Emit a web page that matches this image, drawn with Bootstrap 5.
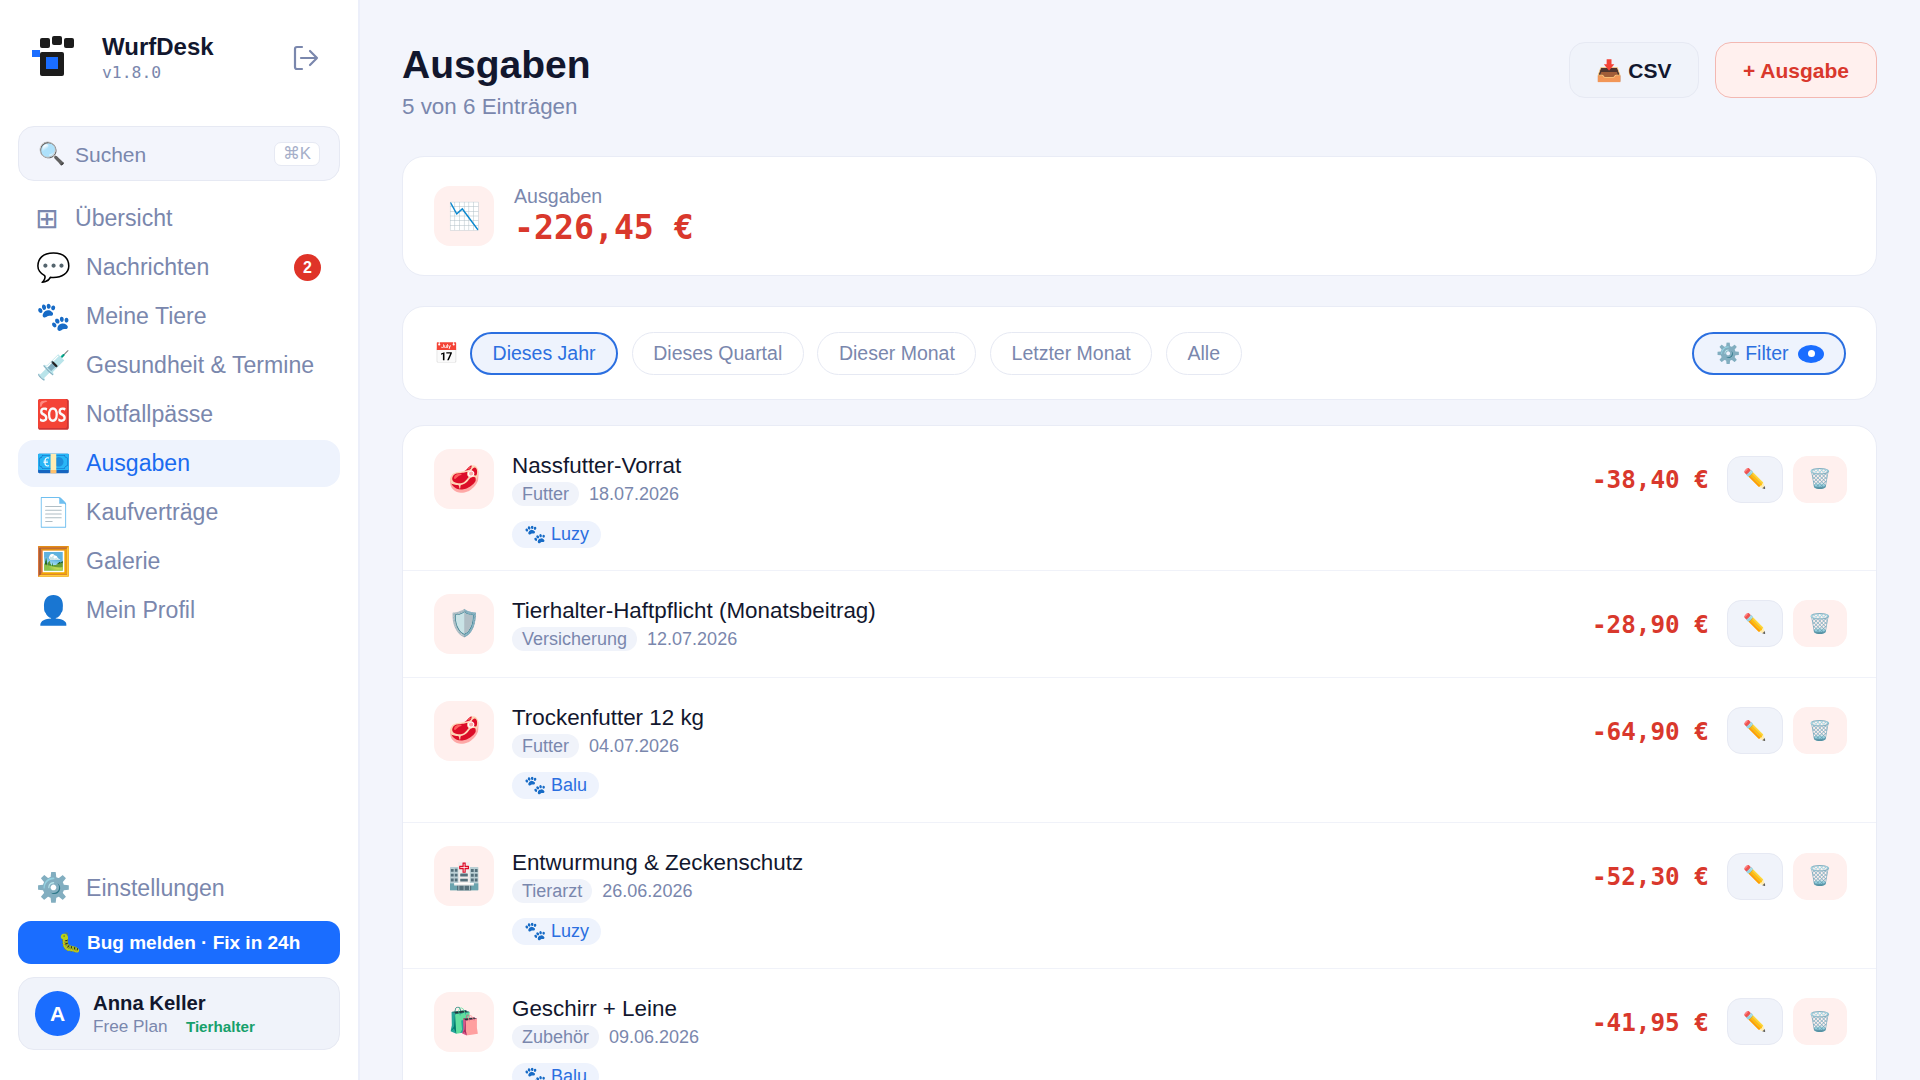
<!DOCTYPE html>
<html lang="de">
<head>
    <meta charset="UTF-8">
    <meta name="viewport" content="width=device-width, initial-scale=1.0">
    <title>WurfDesk - Ausgaben</title>
    <link href="https://cdn.jsdelivr.net/npm/bootstrap@5.3.3/dist/css/bootstrap.min.css" rel="stylesheet">
    <style>
        html, body { height: 100vh; overflow: hidden; }
        body { font-family: "Liberation Sans", Arial, sans-serif; background: #f3f5fc; color: #12172e; }
        .wd-mono { font-family: "DejaVu Sans Mono", monospace; }
        .wd-side { width: 360px; flex: 0 0 360px; height: 100vh; background: #fff; border-right: 2px solid #eceffa; padding: 0 18px; }
        .wd-brand { height: 126px; padding: 27px 0 0 14px; }
        .wd-brand-txt { margin: 5px 0 0 26px; }
        .wd-brand-name { font-size: 24px; font-weight: 700; line-height: 32px; margin-top: -1px; }
        .wd-brand-ver { font-size: 16.4px; line-height: 19px; color: #7a87ad; }
        .wd-logout { margin: 17px 21px 0 auto; width: 28px; height: 28px; color: #7a87ad; }
        .wd-search { height: 55px; background: #f3f5fc; border: 1px solid #e6e9f3; border-radius: 16px; padding: 0 19px 0 19px; font-size: 21px; color: #7a87ad; margin-bottom: 14px; }
        .wd-search-ico { width: 37px; font-size: 22px; }
        .wd-search-txt { padding-top: 2px; }
        .wd-kbd { margin-left: auto; background: #fff; border: 1px solid #e6e9f3; border-radius: 7px; padding: 0 8px; height: 24px; line-height: 22px; font-size: 16.8px; color: #a6afc9; }
        .wd-link { height: 47px; margin-bottom: 2px; padding: 0 19px; border-radius: 16px; font-size: 23.1px; color: #7a87ad; text-decoration: none; }
        .wd-link.on { background: #eef3fd; color: #1a6bf0; }
        .wd-link-ico { width: 50px; font-size: 28px; flex: none; margin-left: -1px; line-height: 1; }
        .wd-grid-ico { width: 40px; flex: none; font-family: "DejaVu Sans", sans-serif; font-size: 28px; line-height: 1; margin-left: -2px; }
        .wd-count { margin-left: auto; width: 27px; height: 27px; background: #df3328; font-size: 16px; padding: 0; line-height: 27px; }
        .wd-bug { height: 43px; background: #1a6dff; border-radius: 13px; color: #fff; font-size: 19px; font-weight: 700; border: 0; padding: 1px 0 0; margin-top: 7.5px; }
        .wd-user { height: 73px; margin: 13px 0 30px; background: #f0f3fa; border: 1px solid #e6e9f3; border-radius: 16px; padding: 0 16px; }
        .wd-avatar { width: 45px; height: 45px; background: #1a6dff; color: #fff; font-weight: 700; font-size: 21px; flex: none; }
        .wd-user-txt { margin-left: 13px; }
        .wd-user-name { font-size: 20.3px; font-weight: 700; line-height: 26px; margin-top: -1px; }
        .wd-user-sub { font-size: 17.2px; line-height: 21px; color: #7a87ad; }
        .wd-role { font-size: 15.2px; font-weight: 700; color: #16a06b; margin-left: 13.6px; }
        .wd-main { padding: 42px 43px 0 42px; min-width: 0; }
        .wd-h1 { font-size: 39px; font-weight: 700; line-height: 46px; margin: 0; }
        .wd-sub { font-size: 22.4px; line-height: 30px; color: #7a87ad; margin-top: 4px; }
        .wd-top { height: 114px; }
        .wd-tbtn { height: 56px; border-radius: 16px; font-size: 21px; font-weight: 700; padding: 1px 0 0; }
        .wd-csv { width: 130px; background: #f0f3fa; border: 1px solid #e6e9f3; color: #12172e; }
        .wd-add { width: 162px; background: #fff0ee; border: 1px solid #f3b8b2; color: #d9382c; }
        .wd-panel { background: #fff; border: 1px solid #e9ecf6; border-radius: 22px; }
        .wd-sum { height: 120px; padding: 0 30px 0 30.6px; margin-bottom: 30px; }
        .wd-tile { width: 60px; height: 60px; background: #fff0ee; border-radius: 16px; font-size: 26px; flex: none; }
        .wd-sum-txt { margin-left: 20.4px; padding-top: 2px; }
        .wd-sum-lab { font-size: 19.6px; line-height: 21px; color: #7a87ad; }
        .wd-sum-val { font-size: 33.2px; font-weight: 700; line-height: 41px; color: #d9382c; }
        .wd-filter { height: 94px; padding: 0 30px 0 31px; margin-bottom: 25px; }
        .wd-cal { font-size: 20px; width: 36px; flex: none; }
        .wd-pill { height: 43px; padding: 1px 20.6px 0; border: 1px solid #e6e9f3; border-radius: 22px; background: #fff; font-size: 19.5px; color: #7a87ad; margin-right: 13.5px; }
        .wd-pill.on { background: #eef3fd; border: 2px solid #2b6fe0; color: #2b6fe0; }
        .wd-pill-end { padding-left: 21.4px; padding-right: 20px; margin-right: 0; margin-left: auto; }
        .wd-eye { width: 26px; height: 18px; border-radius: 50%; background: #1a6dff; margin-left: 9.5px; }
        .wd-eye::after { content: ""; width: 7px; height: 7px; border-radius: 50%; background: #fff; }
        .wd-row { padding: 23px 29px 23px 30.6px; border-bottom: 1px solid #f0f2f9; }
        .wd-row:first-child { padding-bottom: 22px; }
        .wd-body { margin-left: 18.4px; }
        .wd-title { font-size: 22.4px; line-height: 33px; }
        .wd-meta { font-size: 18px; line-height: 24px; color: #7a87ad; }
        .wd-chip { background: #f0f3fa; border-radius: 12px; padding: 0 10px; margin-right: 10px; display: inline-block; }
        .wd-pet { display: inline-block; height: 27px; line-height: 27px; margin-top: 14.6px; padding: 0 12px; border-radius: 14px; background: #eef3fd; color: #2b6fe0; font-size: 18px; }
        .wd-right { height: 60px; margin-left: auto; }
        .wd-amt { font-size: 24.3px; font-weight: 700; color: #d9382c; margin-right: 18px; padding-top: 3px; }
        .wd-act { width: 56px; height: 47px; border-radius: 14px; background: #f0f3fa; border: 1px solid #e6e9f3; font-size: 19px; padding: 1px 0 0; }
        .wd-act.del { background: #fff0ee; border-color: #fff0ee; margin-left: 10px; width: 54px; }
    </style>
</head>
<body class="d-flex">
    <aside class="wd-side d-flex flex-column">
        <div class="wd-brand d-flex">
            <svg width="44" height="42" viewBox="0 0 44 42" class="flex-shrink-0 mt-2">
                <rect x="8" y="3" width="10" height="10" rx="2" fill="#1c1c1c"/>
                <rect x="20" y="1" width="10" height="9" rx="2" fill="#1c1c1c"/>
                <rect x="32" y="3" width="10" height="10" rx="2" fill="#1c1c1c"/>
                <rect x="8" y="17" width="24" height="24" rx="2" fill="#1c1c1c"/>
                <rect x="14" y="22" width="12" height="12" fill="#1a6dff"/>
                <rect x="0" y="15" width="8" height="7" fill="#1a6dff"/>
            </svg>
            <div class="wd-brand-txt">
                <div class="wd-brand-name">WurfDesk</div>
                <div class="wd-brand-ver wd-mono">v1.8.0</div>
            </div>
            <svg class="wd-logout" viewBox="0 0 28 28" fill="none" stroke="currentColor" stroke-width="2.2" stroke-linecap="round" stroke-linejoin="round">
                <path d="M11 3H6a2 2 0 0 0-2 2v18a2 2 0 0 0 2 2h5"/>
                <path d="M10 14h16M19 7l7 7-7 7"/>
            </svg>
        </div>
        <div class="wd-search d-flex align-items-center">
            <span class="wd-search-ico">🔍</span><span class="wd-search-txt">Suchen</span><span class="wd-kbd">⌘K</span>
        </div>
        <nav class="d-flex flex-column">
            <a class="wd-link d-flex align-items-center" href="#"><span class="wd-grid-ico">⊞</span>Übersicht</a>
            <a class="wd-link d-flex align-items-center" href="#"><span class="wd-link-ico">💬</span>Nachrichten<span class="wd-count badge rounded-circle">2</span></a>
            <a class="wd-link d-flex align-items-center" href="#"><span class="wd-link-ico">🐾</span>Meine Tiere</a>
            <a class="wd-link d-flex align-items-center" href="#"><span class="wd-link-ico">💉</span>Gesundheit &amp; Termine</a>
            <a class="wd-link d-flex align-items-center" href="#"><span class="wd-link-ico">🆘</span>Notfallpässe</a>
            <a class="wd-link on d-flex align-items-center" href="#"><span class="wd-link-ico">💶</span>Ausgaben</a>
            <a class="wd-link d-flex align-items-center" href="#"><span class="wd-link-ico">📄</span>Kaufverträge</a>
            <a class="wd-link d-flex align-items-center" href="#"><span class="wd-link-ico">🖼️</span>Galerie</a>
            <a class="wd-link d-flex align-items-center" href="#"><span class="wd-link-ico">👤</span>Mein Profil</a>
        </nav>
        <a class="wd-link d-flex align-items-center mt-auto" href="#"><span class="wd-link-ico">⚙️</span>Einstellungen</a>
        <button class="wd-bug btn" type="button">🐛 Bug melden · Fix in 24h</button>
        <div class="wd-user d-flex align-items-center">
            <div class="wd-avatar rounded-circle d-flex align-items-center justify-content-center">A</div>
            <div class="wd-user-txt">
                <div class="wd-user-name">Anna Keller</div>
                <div class="wd-user-sub">Free Plan <span class="wd-role">Tierhalter</span></div>
            </div>
        </div>
    </aside>
    <main class="wd-main flex-grow-1">
        <div class="wd-top d-flex align-items-start">
            <div>
                <h1 class="wd-h1">Ausgaben</h1>
                <div class="wd-sub">5 von 6 Einträgen</div>
            </div>
            <div class="ms-auto d-flex">
                <button class="wd-tbtn wd-csv btn me-3" type="button">📥 CSV</button>
                <button class="wd-tbtn wd-add btn" type="button">+ Ausgabe</button>
            </div>
        </div>
        <section class="wd-panel wd-sum d-flex align-items-center">
            <div class="wd-tile d-flex align-items-center justify-content-center">📉</div>
            <div class="wd-sum-txt">
                <div class="wd-sum-lab">Ausgaben</div>
                <div class="wd-sum-val wd-mono">-226,45 €</div>
            </div>
        </section>
        <section class="wd-panel wd-filter d-flex align-items-center">
            <span class="wd-cal">📅</span>
            <button class="wd-pill on btn" type="button">Dieses Jahr</button>
            <button class="wd-pill btn" type="button">Dieses Quartal</button>
            <button class="wd-pill btn" type="button">Dieser Monat</button>
            <button class="wd-pill btn" type="button">Letzter Monat</button>
            <button class="wd-pill btn" type="button">Alle</button>
            <button class="wd-pill wd-pill-end on btn d-flex align-items-center" type="button">⚙️ Filter<span class="wd-eye d-flex align-items-center justify-content-center"></span></button>
        </section>
        <section class="wd-panel overflow-hidden" id="rows"></section>
    </main>
    <script>
        let entries = [
            { ico: '🥩', title: 'Nassfutter-Vorrat', cat: 'Futter', date: '18.07.2026', pet: 'Luzy', amt: '-38,40 €' },
            { ico: '🛡️', title: 'Tierhalter-Haftpflicht (Monatsbeitrag)', cat: 'Versicherung', date: '12.07.2026', pet: '', amt: '-28,90 €' },
            { ico: '🥩', title: 'Trockenfutter 12 kg', cat: 'Futter', date: '04.07.2026', pet: 'Balu', amt: '-64,90 €' },
            { ico: '🏥', title: 'Entwurmung &amp; Zeckenschutz', cat: 'Tierarzt', date: '26.06.2026', pet: 'Luzy', amt: '-52,30 €' },
            { ico: '🛍️', title: 'Geschirr + Leine', cat: 'Zubehör', date: '09.06.2026', pet: 'Balu', amt: '-41,95 €' }
        ];
        document.getElementById('rows').innerHTML = entries.map(e => `
            <div class="wd-row d-flex align-items-start">
                <div class="wd-tile d-flex align-items-center justify-content-center">${e.ico}</div>
                <div class="wd-body">
                    <div class="wd-title">${e.title}</div>
                    <div class="wd-meta"><span class="wd-chip">${e.cat}</span>${e.date}</div>
                    ${e.pet ? `<span class="wd-pet">🐾 ${e.pet}</span>` : ''}
                </div>
                <div class="wd-right d-flex align-items-center">
                    <span class="wd-amt wd-mono">${e.amt}</span>
                    <button class="wd-act btn" type="button">✏️</button>
                    <button class="wd-act del btn" type="button">🗑️</button>
                </div>
            </div>`).join('');
    </script>
    <script src="https://cdn.jsdelivr.net/npm/bootstrap@5.3.3/dist/js/bootstrap.bundle.min.js"></script>
</body>
</html>
